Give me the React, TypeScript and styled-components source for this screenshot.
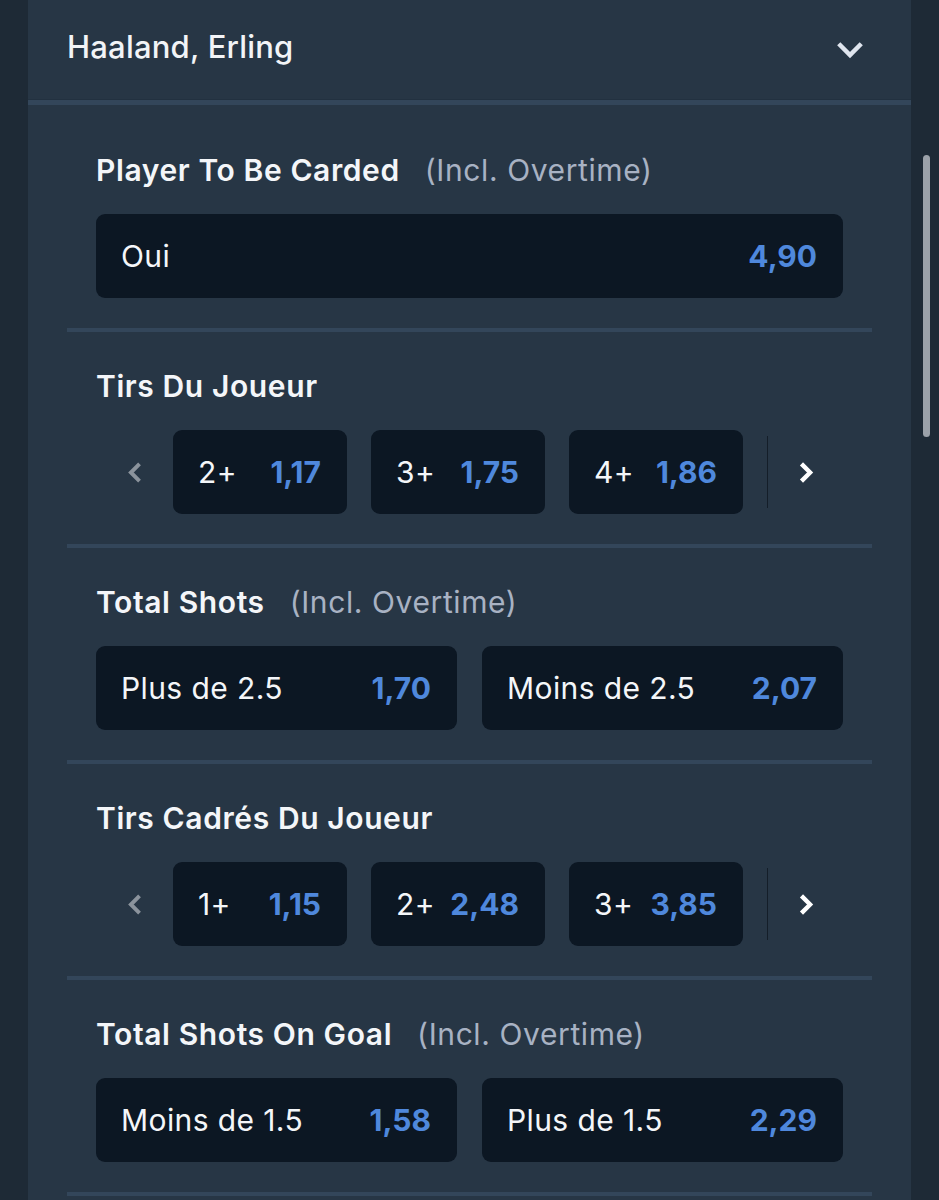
import React from 'react'
import styled, { createGlobalStyle } from 'styled-components'

const GlobalStyle = createGlobalStyle`
  html, body {
    margin: 0;
    padding: 0;
    background: #1e2a36;
    font-family: Inter, Lato, sans-serif;
    -webkit-font-smoothing: antialiased;
  }
`

const Page = styled.div`
  display: flex;
  width: 939px;
  height: 1200px;
  overflow: hidden;
  background: #1e2a36;
`

const Gutter = styled.div`
  width: 28px;
  flex-shrink: 0;
  display: flex;
  flex-direction: column;
  align-items: center;
`

const ScrollThumb = styled.div`
  margin-top: 155px;
  margin-left: 2px;
  width: 7px;
  height: 282px;
  border-radius: 4px;
  background: #9ba1a9;
`

const Panel = styled.div`
  flex: 1;
  background: #273645;
  display: flex;
  flex-direction: column;
`

const Header = styled.div`
  height: 99px;
  display: flex;
  align-items: center;
  justify-content: space-between;
  padding: 0 46px 0 39px;
  border-bottom: 1px solid #223140;
`

const PlayerName = styled.h1`
  margin: 0 0 6px;
  font-size: 31px;
  font-weight: 500;
  color: #f2f4f7;
  letter-spacing: 0.2px;
`

const HeaderRule = styled.div`
  height: 5px;
  background: #33465a;
`

const Markets = styled.div`
  padding: 0 39px;
  display: flex;
  flex-direction: column;
`

const Market = styled.section<{ $first?: boolean }>`
  padding: ${(p) => (p.$first ? '47px' : '36px')} 29px 30px;
  border-bottom: 4px solid #33465a;
`

const MarketTitle = styled.h2`
  margin: 0 0 26px;
  height: 36px;
  display: flex;
  align-items: center;
  gap: 25px;
  font-size: 30px;
  font-weight: 600;
  color: #f4f6f9;
  letter-spacing: 0.6px;
`

const Qualifier = styled.span`
  font-weight: 400;
  color: #a8b2c3;
`

const OddsGrid = styled.div<{ $cols: number }>`
  display: grid;
  grid-template-columns: repeat(${(p) => p.$cols}, 1fr);
  gap: 25px;
`

const OddsButton = styled.button`
  height: 84px;
  border: none;
  border-radius: 9px;
  background: #0c1723;
  display: flex;
  align-items: center;
  justify-content: space-between;
  padding: 0 26px 0 25px;
  font-family: inherit;
  cursor: pointer;
`

const Label = styled.span`
  font-size: 30px;
  font-weight: 400;
  color: #f4f6f9;
  letter-spacing: 0.4px;
`

const Price = styled.span`
  font-size: 30px;
  font-weight: 700;
  color: #4f88dc;
`

const Carousel = styled.div`
  display: flex;
  align-items: center;
  margin-left: 21px;
`

const Arrow = styled.button<{ $dim?: boolean }>`
  width: 36px;
  height: 84px;
  border: none;
  background: none;
  padding: 0;
  display: flex;
  align-items: center;
  justify-content: center;
  color: ${(p) => (p.$dim ? '#8b939c' : '#ffffff')};
  cursor: pointer;
`

const Track = styled.div`
  display: flex;
  gap: 24px;
  margin-left: 20px;
`

const LadderButton = styled(OddsButton)`
  width: 174px;
`

const Divider = styled.div`
  width: 1px;
  height: 72px;
  margin: 0 19px 0 24px;
  background: #141e29;
`

const HeaderToggle = styled.span`
  color: #dfe5ee;
  display: flex;
  margin-bottom: 2px;
`

const chevronPaths = {
  left: 'M13.5 2.5 L6 10 L13.5 17.5',
  right: 'M6.5 2.5 L14 10 L6.5 17.5',
  down: 'M2.5 6.5 L10 14 L17.5 6.5',
}

const Chevron = ({ dir, size = 20, weight = 3.4 }: { dir: keyof typeof chevronPaths; size?: number; weight?: number }) => (
  <svg width={size} height={size} viewBox="0 0 20 20" fill="none">
    <path d={chevronPaths[dir]} stroke="currentColor" strokeWidth={weight} strokeLinecap="butt" strokeLinejoin="miter" />
  </svg>
)

type Pick = { label: string; price: string }

const Ladder = ({ picks }: { picks: Pick[] }) => (
  <Carousel>
    <Arrow $dim>
      <Chevron dir="left" size={23} weight={3.4} />
    </Arrow>
    <Track>
      {picks.map((p) => (
        <LadderButton key={p.label}>
          <Label>{p.label}</Label>
          <Price>{p.price}</Price>
        </LadderButton>
      ))}
    </Track>
    <Divider />
    <Arrow>
      <Chevron dir="right" size={23} weight={3.8} />
    </Arrow>
  </Carousel>
)

const Options = ({ picks }: { picks: Pick[] }) => (
  <OddsGrid $cols={picks.length}>
    {picks.map((p) => (
      <OddsButton key={p.label}>
        <Label>{p.label}</Label>
        <Price>{p.price}</Price>
      </OddsButton>
    ))}
  </OddsGrid>
)

const App: React.FC = () => {
  return (
    <>
      <GlobalStyle />
      <Page>
        <Gutter />
        <Panel>
          <Header>
            <PlayerName>Haaland, Erling</PlayerName>
            <HeaderToggle>
              <Chevron dir="down" size={30} weight={3} />
            </HeaderToggle>
          </Header>
          <HeaderRule />
          <Markets>
            <Market $first>
              <MarketTitle>
                Player To Be Carded <Qualifier>(Incl. Overtime)</Qualifier>
              </MarketTitle>
              <Options picks={[{ label: 'Oui', price: '4,90' }]} />
            </Market>

            <Market>
              <MarketTitle>Tirs Du Joueur</MarketTitle>
              <Ladder
                picks={[
                  { label: '2+', price: '1,17' },
                  { label: '3+', price: '1,75' },
                  { label: '4+', price: '1,86' },
                ]}
              />
            </Market>

            <Market>
              <MarketTitle>
                Total Shots <Qualifier>(Incl. Overtime)</Qualifier>
              </MarketTitle>
              <Options
                picks={[
                  { label: 'Plus de 2.5', price: '1,70' },
                  { label: 'Moins de 2.5', price: '2,07' },
                ]}
              />
            </Market>

            <Market>
              <MarketTitle>Tirs Cadrés Du Joueur</MarketTitle>
              <Ladder
                picks={[
                  { label: '1+', price: '1,15' },
                  { label: '2+', price: '2,48' },
                  { label: '3+', price: '3,85' },
                ]}
              />
            </Market>

            <Market>
              <MarketTitle>
                Total Shots On Goal <Qualifier>(Incl. Overtime)</Qualifier>
              </MarketTitle>
              <Options
                picks={[
                  { label: 'Moins de 1.5', price: '1,58' },
                  { label: 'Plus de 1.5', price: '2,29' },
                ]}
              />
            </Market>
          </Markets>
        </Panel>
        <Gutter>
          <ScrollThumb />
        </Gutter>
      </Page>
    </>
  )
}

export default App
